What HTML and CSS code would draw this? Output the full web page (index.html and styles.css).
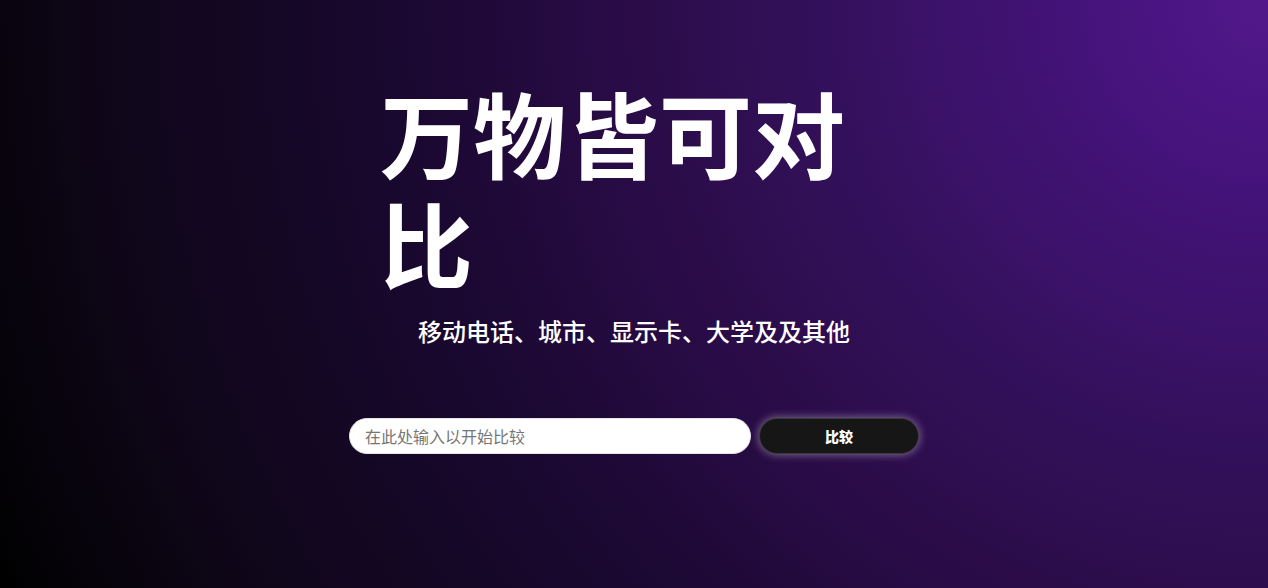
FILE: index.html
```html
<!DOCTYPE html>
<html lang="zh-CN">
<head>
<meta charset="utf-8">
<title>万物皆可对比</title>
<link rel="stylesheet" href="styles.css">
</head>
<body>
<main class="hero">
  <h1 class="title">万物皆可对比</h1>
  <p class="subtitle">移动电话、城市、显示卡、大学及及其他</p>
  <form class="search" onsubmit="return false">
    <input class="search-input" type="text" placeholder="在此处输入以开始比较">
    <button class="search-btn" type="submit">比较</button>
  </form>
</main>
</body>
</html>
```

FILE: styles.css
```css
html, body {
  margin: 0;
  padding: 0;
  height: 100%;
}
body {
  font-family: "Noto Sans CJK SC", "Noto Sans", sans-serif;
  background: radial-gradient(circle at 100% 0%,
    #52188b 0px,
    #44137a 190px,
    #321058 475px,
    #2a0c48 640px,
    #1a0830 870px,
    #0d0616 1200px,
    #000 1398px);
  color: #fff;
  overflow: hidden;
}
.hero {
  height: 100%;
  display: flex;
  flex-direction: column;
  align-items: center;
  padding-top: 77px;
  box-sizing: border-box;
}
.title {
  width: 508px;
  margin: 0;
  font-size: 93px;
  line-height: 110px;
  font-weight: 700;
  text-align: left;
}
.subtitle {
  margin: 17px 0 0;
  font-size: 24px;
  line-height: 34px;
  font-weight: 500;
}
.search {
  margin-top: 70px;
  display: flex;
  gap: 8px;
}
.search-input {
  width: 402px;
  height: 36px;
  box-sizing: border-box;
  border: 1px solid #e4e4e4;
  border-radius: 18px;
  padding: 0 15px;
  font-family: inherit;
  font-size: 16px;
  color: #222;
  background: #fff;
  outline: none;
}
.search-input::placeholder {
  color: #767676;
}
.search-btn {
  width: 160px;
  height: 36px;
  box-sizing: border-box;
  border: 1px solid #3a3a3a;
  border-radius: 18px;
  background: #161616;
  color: #fff;
  font-family: inherit;
  font-size: 14px;
  font-weight: 900;
  box-shadow: 0 0 10px rgba(255, 255, 255, 0.45);
  cursor: pointer;
}
```
